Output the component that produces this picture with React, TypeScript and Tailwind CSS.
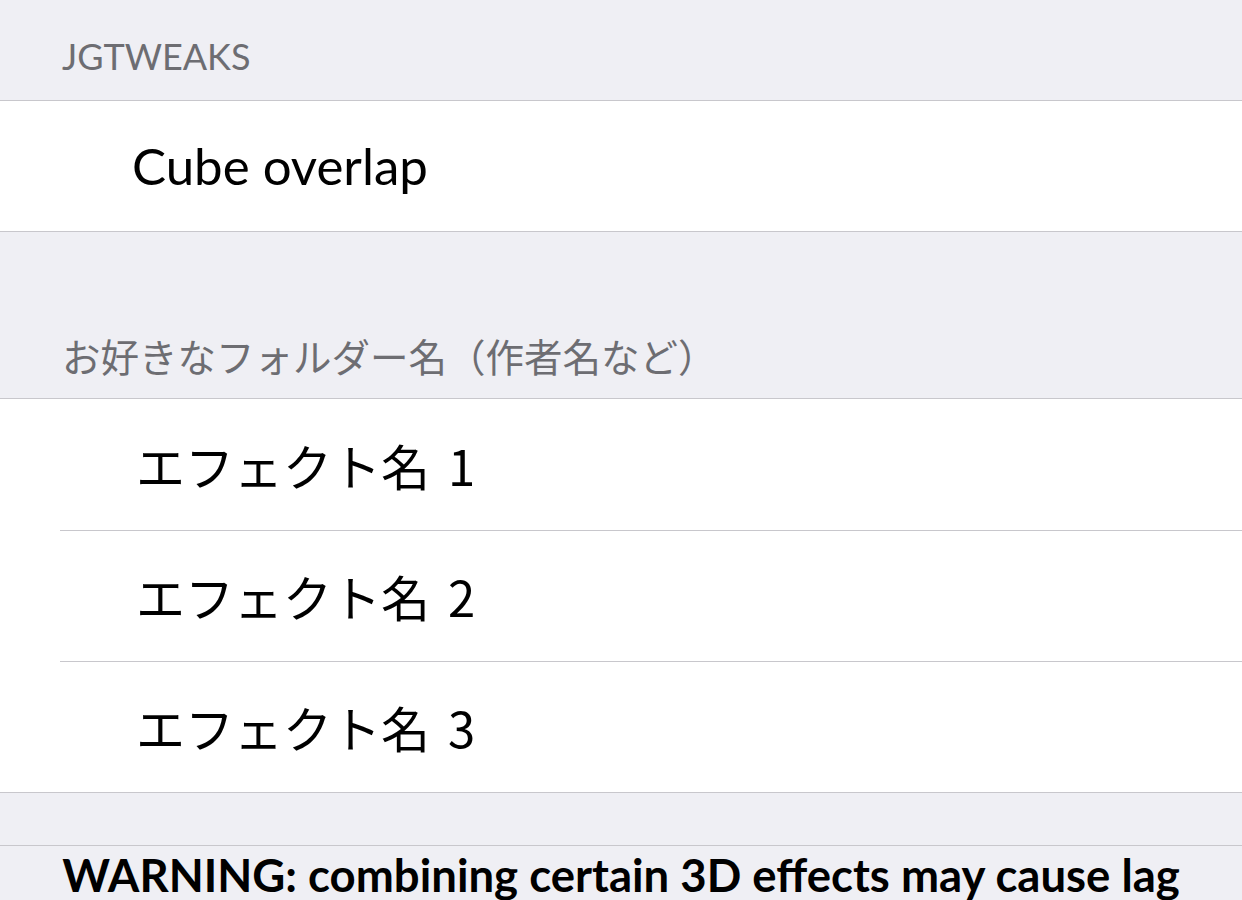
const LATIN = "font-['Lato','Noto_Sans_CJK_JP',sans-serif]";
const JP = "font-['Noto_Sans_CJK_JP',sans-serif]";

const EFFECTS = [
  { label: 'エフェクト名', num: '1' },
  { label: 'エフェクト名', num: '2' },
  { label: 'エフェクト名', num: '3' },
];

export default function App() {
  return (
    <div className="h-[900px] w-[1242px] overflow-hidden bg-[#efeff4]">
      {/* JGTweaks section */}
      <div className="h-[100px] flex items-end px-[62px] pb-[26px]">
        <span className={`${LATIN} text-[36px] leading-none tracking-[0px] text-[#6d6d72]`}>JGTWEAKS</span>
      </div>
      <div className="bg-white border-y border-[#c8c7cc]">
        <div className="h-[130px] flex items-center pl-[132px]">
          <span className={`${LATIN} text-[51px] text-black`}>Cube overlap</span>
        </div>
      </div>

      {/* Folder section */}
      <div className="h-[166px] flex items-end px-[62px] pb-[24px]">
        <span className={`${JP} text-[38.5px] leading-none text-[#6d6d72]`}>お好きなフォルダー名（作者名など）</span>
      </div>
      <div className="bg-white border-y border-[#c8c7cc]">
        {EFFECTS.map((e, i) => (
          <div key={e.num} className="pl-[60px]">
            <div className={`h-[131px] flex items-center pl-[76px] ${i > 0 ? 'border-t border-[#c8c7cc]' : ''}`}>
              <span className={`${JP} text-[49px] text-black`}>
                {e.label}
                <span className="ml-[18px]">{e.num}</span>
              </span>
            </div>
          </div>
        ))}
      </div>

      {/* Footer */}
      <div className="h-[52px]" />
      <div className="border-t border-[#c8c7cc] pt-[6px] text-center">
        <span className={`${LATIN} text-[45.5px] font-bold leading-none text-black`}>
          WARNING: combining certain 3D effects may cause lag
        </span>
      </div>
    </div>
  );
}
